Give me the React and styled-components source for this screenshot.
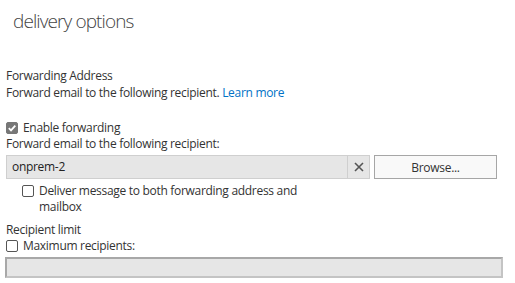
import React, { useState } from 'react';
import styled, { createGlobalStyle } from 'styled-components';

const GlobalStyle = createGlobalStyle`
  html, body {
    margin: 0;
    padding: 0;
    background: #fff;
  }
  body {
    font-family: "Open Sans", "Noto Sans", sans-serif;
    font-size: 12px;
    letter-spacing: -0.3px;
    color: #333;
  }
`;

const Page = styled.div`
  width: 515px;
  height: 283px;
  overflow: hidden;
  padding: 0 0 0 6px;
  box-sizing: border-box;
`;

const Title = styled.h1`
  margin: 0;
  padding: 8px 0 0 7px;
  height: 57px;
  box-sizing: border-box;
  font-size: 19px;
  font-weight: 300;
  letter-spacing: -0.9px;
  color: #444;
  line-height: 26px;
`;

const Section = styled.div`
  display: flex;
  flex-direction: column;
  margin-top: ${({ $gap }) => $gap || 0}px;
`;

const Line = styled.div`
  line-height: ${({ $lh }) => $lh || 16}px;
  color: #333;
  white-space: nowrap;
`;

const Link = styled.a`
  color: #0072c6;
  text-decoration: none;
`;

const CheckRow = styled.label`
  display: flex;
  align-items: flex-start;
  gap: 5px;
  line-height: 16px;
  padding-left: ${({ $indent }) => $indent || 0}px;
  margin-top: ${({ $top }) => $top || 0}px;
  cursor: pointer;
`;

const Box = styled.span`
  flex: none;
  width: 12px;
  height: 12px;
  margin-top: 2px;
  box-sizing: border-box;
  border-radius: 2px;
  border: 1px solid ${({ $checked }) => ($checked ? '#777' : '#555')};
  background: ${({ $checked }) => ($checked ? '#777' : '#fff')};
  display: flex;
  align-items: center;
  justify-content: center;
`;

const FieldRow = styled.div`
  display: flex;
  gap: 4px;
  margin-top: 3px;
  height: 24px;
`;

const Field = styled.div`
  width: 364px;
  box-sizing: border-box;
  display: flex;
  background: #e6e6e6;
  border: 1px solid #cfcfcf;
`;

const FieldText = styled.div`
  flex: 1;
  padding: 0 5px;
  line-height: 22px;
  color: #222;
`;

const ClearButton = styled.button`
  width: 22px;
  border: none;
  border-left: 1px solid #cfcfcf;
  background: transparent;
  padding: 0;
  display: flex;
  align-items: center;
  justify-content: center;
  color: #555;
`;

const BrowseButton = styled.button`
  width: 123px;
  box-sizing: border-box;
  border: 1px solid #a6a6a6;
  background: #f9f9f9;
  font-family: inherit;
  font-size: 12px;
  letter-spacing: -0.3px;
  color: #333;
  padding: 0;
`;

const WideField = styled.div`
  width: 498px;
  height: 21px;
  margin-top: 3px;
  margin-left: -1px;
  box-sizing: border-box;
  background: #e6e6e6;
  border-style: solid;
  border-width: 2px;
  border-color: #a8a8a8 #c4c4c4 #c4c4c4 #a8a8a8;
`;

const Check = ({ checked }) => (
  <Box $checked={checked}>
    {checked && (
      <svg width="10" height="10" viewBox="0 0 10 10">
        <path d="M1.8 5.2 L4 7.4 L8.3 2.6" fill="none" stroke="#fff" strokeWidth="1.8" />
      </svg>
    )}
  </Box>
);

export default function App() {
  const [forward, setForward] = useState(true);
  const [both, setBoth] = useState(false);
  const [limit, setLimit] = useState(false);

  return (
    <>
      <GlobalStyle />
      <Page>
        <Title>delivery options</Title>
        <Section $gap={10}>
          <Line $lh={17}>Forwarding Address</Line>
          <Line $lh={17}>
            Forward email to the following recipient. <Link href="#">Learn more</Link>
          </Line>
        </Section>
        <Section $gap={19}>
          <CheckRow onClick={() => setForward(!forward)}>
            <Check checked={forward} />
            Enable forwarding
          </CheckRow>
          <Line>Forward email to the following recipient:</Line>
          <FieldRow>
            <Field>
              <FieldText>onprem-2</FieldText>
              <ClearButton>
                <svg width="10" height="10" viewBox="0 0 10 10">
                  <path d="M1 1 L9 9 M9 1 L1 9" stroke="#555" strokeWidth="1.6" />
                </svg>
              </ClearButton>
            </Field>
            <BrowseButton>Browse...</BrowseButton>
          </FieldRow>
          <CheckRow $indent={16} $top={4} onClick={() => setBoth(!both)}>
            <Check checked={both} />
            <span>
              Deliver message to both forwarding address and
              <br />
              mailbox
            </span>
          </CheckRow>
        </Section>
        <Section $gap={6}>
          <Line $lh={17}>Recipient limit</Line>
          <CheckRow onClick={() => setLimit(!limit)}>
            <Check checked={limit} />
            Maximum recipients:
          </CheckRow>
          <WideField />
        </Section>
      </Page>
    </>
  );
}
